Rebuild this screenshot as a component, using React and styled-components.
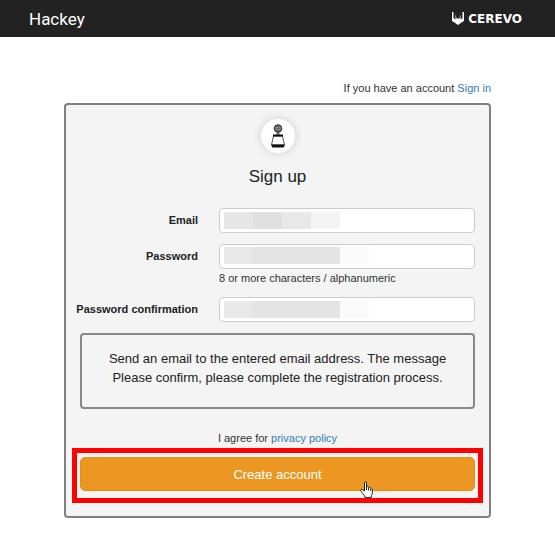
import React from 'react';
import styled, { createGlobalStyle } from 'styled-components';

const GlobalStyle = createGlobalStyle`
  * {
    box-sizing: border-box;
  }

  body {
    margin: 0;
    background: #fff;
    color: #333;
    font-family: "Liberation Sans", Arial, sans-serif;
    font-size: 11px;
    line-height: 16px;
  }
`;

const Header = styled.header`
  display: flex;
  align-items: center;
  justify-content: space-between;
  height: 37px;
  padding: 0 33px 0 29px;
  background: #222;
  color: #fff;
`;

const Brand = styled.a`
  color: #fff;
  font-family: Roboto, sans-serif;
  font-size: 17px;
  line-height: 20px;
  text-decoration: none;
`;

const Company = styled.a`
  display: flex;
  align-items: center;
  gap: 4px;
  color: #fff;
  font-family: "DejaVu Sans", sans-serif;
  font-size: 12px;
  font-weight: 700;
  text-decoration: none;
`;

const Main = styled.main`
  padding: 43px 64px;
`;

const TopLine = styled.p`
  margin: 0 0 7px;
  text-align: right;
`;

const TextLink = styled.a`
  color: #337ab7;
  text-decoration: none;
`;

const Card = styled.form`
  display: flex;
  flex-direction: column;
  padding: 14px 14px 13px;
  background: #f4f4f4;
  border: 2px solid #808080;
  border-radius: 4px;
`;

const Avatar = styled.div`
  display: flex;
  align-items: center;
  justify-content: center;
  align-self: center;
  width: 34px;
  height: 34px;
  border-radius: 50%;
  background: #fff;
  box-shadow: 0 0 8px #ccc;
`;

const Title = styled.h1`
  margin: 14px 0 21px;
  color: #222;
  font-size: 17px;
  font-weight: 400;
  line-height: 20px;
  text-align: center;
`;

const Fields = styled.div`
  display: flex;
  flex-direction: column;
  gap: 11px;
`;

const Field = styled.div`
  display: grid;
  grid-template-columns: 118px 1fr;
  column-gap: 21px;
`;

const Label = styled.label`
  justify-self: end;
  color: #222;
  font-weight: 700;
  line-height: 25px;
  white-space: nowrap;
`;

const Input = styled.input`
  width: 100%;
  height: 25px;
  padding: 0 8px;
  border: 1px solid #ccc;
  border-radius: 4px;
  background: ${p => p.$mask} 4px ${p => p.$maskTop || '3px'} / 145px 17px no-repeat #fff;
  font: inherit;
`;

const Help = styled.small`
  grid-column: 2;
  padding: 1px 0 0;
  font-size: 11px;
`;

const Notice = styled.p`
  margin: 11px 0 21px;
  padding: 14px 12px 20px;
  border: 2px solid #888;
  border-radius: 4px;
  color: #222;
  font-size: 13px;
  line-height: 19px;
  text-align: center;
`;

const Agreement = styled.p`
  margin: 0 0 2px;
  text-align: center;
`;

const Highlight = styled.div`
  position: relative;
  margin: 0 -8px;
  padding: 4px 3px 7px;
  border: 5px solid #f00;
`;

const SubmitButton = styled.button`
  display: block;
  width: 100%;
  height: 34px;
  padding: 0;
  border: 1px solid #e38d13;
  border-radius: 5px;
  background: #ec9722;
  color: #fff;
  font-family: inherit;
  font-size: 13px;
  cursor: pointer;
`;

const Pointer = styled.svg`
  position: absolute;
  right: 105px;
  bottom: 0;
  pointer-events: none;
`;

const EMAIL_MASK =
  'linear-gradient(90deg, #e6e6e6 0 29px, #e0e0e0 29px 58px, #e8e8e8 58px 87px, #f4f4f4 87px 116px, #fff 116px)';
const PASSWORD_MASK =
  'linear-gradient(90deg, #e8e8e8 0 29px, #e3e3e3 29px 116px, #fafafa 116px)';

function CerevoMark() {
  return (
    <svg width="12" height="13" viewBox="0 0 12 13" aria-hidden="true">
      <path d="M0 0H1.5V6L3.5 7.5V2L4.5 6.5H7.5L8.5 2V7.5L10.5 6V0H12V9L9.5 10.5L6 13L2.5 10.5L0 9Z" fill="#fff" />
    </svg>
  );
}

function DeviceIcon() {
  return (
    <svg width="16" height="24" viewBox="0 0 16 24" aria-hidden="true">
      <path d="M8 8V12" stroke="#777" strokeWidth="3" />
      <circle cx="8" cy="4.5" r="3.8" fill="#666" stroke="#333" />
      <path d="M5 3.5H11M5 5.5H11" stroke="#888" />
      <path d="M3.5 12H12.5L14.5 21H1.5Z" fill="#fff" stroke="#555" />
      <path d="M3 10.5H13V12.5H3Z" fill="#111" />
      <path d="M1.5 20.5H14.5V22L13.5 23.5H2.5L1.5 22Z" fill="#111" />
    </svg>
  );
}

function HandPointer() {
  return (
    <Pointer width="13" height="17" viewBox="0 0 13 17" aria-hidden="true">
      <path
        d="M4.5 10V1.8C4.5 .2 6.5 .2 6.5 1.8V6C7 5.2 8.6 5.4 8.6 6.6C9.2 6 10.6 6.2 10.6 7.4C11.3 7 12.4 7.4 12.4 8.6V11C12.4 13 11.5 13.5 11.3 16.4H5C4.8 14.5 2.3 12 .8 9.8C.1 8.6 1.5 7.8 2.5 8.6Z"
        fill="#fff"
        stroke="#222"
      />
      <path d="M6.5 6V9M8.6 7V9.5M10.6 8V10" stroke="#222" />
    </Pointer>
  );
}

export default function App() {
  return (
    <>
      <GlobalStyle />
      <Header>
        <Brand href="#">Hackey</Brand>
        <Company href="#">
          <CerevoMark />
          CEREVO
        </Company>
      </Header>

      <Main>
        <TopLine>
          If you have an account <TextLink href="#">Sign in</TextLink>
        </TopLine>

        <Card onSubmit={(e) => e.preventDefault()}>
          <Avatar>
            <DeviceIcon />
          </Avatar>
          <Title>Sign up</Title>

          <Fields>
            <Field>
              <Label htmlFor="email">Email</Label>
              <Input id="email" type="email" $mask={EMAIL_MASK} />
            </Field>
            <Field>
              <Label htmlFor="password">Password</Label>
              <Input id="password" type="password" $mask={PASSWORD_MASK} $maskTop="2px" />
              <Help>8 or more characters / alphanumeric</Help>
            </Field>
            <Field>
              <Label htmlFor="confirmation">Password confirmation</Label>
              <Input id="confirmation" type="password" $mask={PASSWORD_MASK} />
            </Field>
          </Fields>

          <Notice>
            Send an email to the entered email address. The message
            <br />
            Please confirm, please complete the registration process.
          </Notice>

          <Agreement>
            I agree for <TextLink href="#">privacy policy</TextLink>
          </Agreement>
          <Highlight>
            <SubmitButton type="submit">Create account</SubmitButton>
            <HandPointer />
          </Highlight>
        </Card>
      </Main>
    </>
  );
}
